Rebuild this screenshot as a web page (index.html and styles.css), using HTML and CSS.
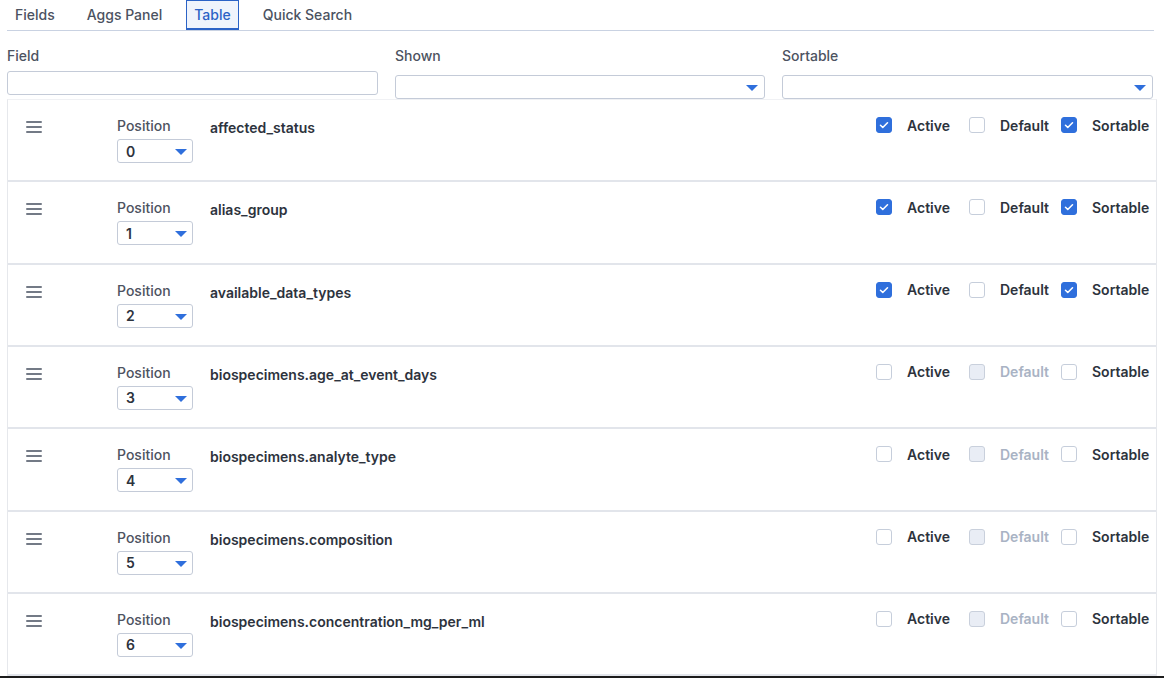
FILE: index.html
```html
<!DOCTYPE html>
<html>
<head>
<meta charset="utf-8">
<link rel="stylesheet" href="styles.css">
</head>
<body>
<div class="frame">
  <nav class="tabs">
    <div class="tab">Fields</div>
    <div class="tab">Aggs Panel</div>
    <div class="tab active">Table</div>
    <div class="tab">Quick Search</div>
  </nav>

  <div class="filters">
    <div class="filter">
      <label class="flabel">Field</label>
      <div class="input"></div>
    </div>
    <div class="filter">
      <label class="flabel">Shown</label>
      <div class="select wide"><span class="caret"></span></div>
    </div>
    <div class="filter">
      <label class="flabel">Sortable</label>
      <div class="select wide"><span class="caret"></span></div>
    </div>
  </div>

  <div class="list">
    <div class="row">
      <div class="handle"><span></span><span></span><span></span></div>
      <div class="pos"><div class="plabel">Position</div><div class="select small"><span class="val">0</span><span class="caret"></span></div></div>
      <div class="name">affected_status</div>
      <div class="checks">
        <div class="chk"><span class="box on"><svg viewBox="0 0 16 16"><path d="M4 8.3l2.6 2.5L12 5.4" /></svg></span><span class="clabel">Active</span></div>
        <div class="chk"><span class="box"></span><span class="clabel">Default</span></div>
        <div class="chk"><span class="box on"><svg viewBox="0 0 16 16"><path d="M4 8.3l2.6 2.5L12 5.4" /></svg></span><span class="clabel">Sortable</span></div>
      </div>
    </div>
    <div class="row">
      <div class="handle"><span></span><span></span><span></span></div>
      <div class="pos"><div class="plabel">Position</div><div class="select small"><span class="val">1</span><span class="caret"></span></div></div>
      <div class="name">alias_group</div>
      <div class="checks">
        <div class="chk"><span class="box on"><svg viewBox="0 0 16 16"><path d="M4 8.3l2.6 2.5L12 5.4" /></svg></span><span class="clabel">Active</span></div>
        <div class="chk"><span class="box"></span><span class="clabel">Default</span></div>
        <div class="chk"><span class="box on"><svg viewBox="0 0 16 16"><path d="M4 8.3l2.6 2.5L12 5.4" /></svg></span><span class="clabel">Sortable</span></div>
      </div>
    </div>
    <div class="row">
      <div class="handle"><span></span><span></span><span></span></div>
      <div class="pos"><div class="plabel">Position</div><div class="select small"><span class="val">2</span><span class="caret"></span></div></div>
      <div class="name">available_data_types</div>
      <div class="checks">
        <div class="chk"><span class="box on"><svg viewBox="0 0 16 16"><path d="M4 8.3l2.6 2.5L12 5.4" /></svg></span><span class="clabel">Active</span></div>
        <div class="chk"><span class="box"></span><span class="clabel">Default</span></div>
        <div class="chk"><span class="box on"><svg viewBox="0 0 16 16"><path d="M4 8.3l2.6 2.5L12 5.4" /></svg></span><span class="clabel">Sortable</span></div>
      </div>
    </div>
    <div class="row">
      <div class="handle"><span></span><span></span><span></span></div>
      <div class="pos"><div class="plabel">Position</div><div class="select small"><span class="val">3</span><span class="caret"></span></div></div>
      <div class="name">biospecimens.age_at_event_days</div>
      <div class="checks">
        <div class="chk"><span class="box"></span><span class="clabel">Active</span></div>
        <div class="chk disabled"><span class="box"></span><span class="clabel">Default</span></div>
        <div class="chk"><span class="box"></span><span class="clabel">Sortable</span></div>
      </div>
    </div>
    <div class="row">
      <div class="handle"><span></span><span></span><span></span></div>
      <div class="pos"><div class="plabel">Position</div><div class="select small"><span class="val">4</span><span class="caret"></span></div></div>
      <div class="name">biospecimens.analyte_type</div>
      <div class="checks">
        <div class="chk"><span class="box"></span><span class="clabel">Active</span></div>
        <div class="chk disabled"><span class="box"></span><span class="clabel">Default</span></div>
        <div class="chk"><span class="box"></span><span class="clabel">Sortable</span></div>
      </div>
    </div>
    <div class="row">
      <div class="handle"><span></span><span></span><span></span></div>
      <div class="pos"><div class="plabel">Position</div><div class="select small"><span class="val">5</span><span class="caret"></span></div></div>
      <div class="name">biospecimens.composition</div>
      <div class="checks">
        <div class="chk"><span class="box"></span><span class="clabel">Active</span></div>
        <div class="chk disabled"><span class="box"></span><span class="clabel">Default</span></div>
        <div class="chk"><span class="box"></span><span class="clabel">Sortable</span></div>
      </div>
    </div>
    <div class="row">
      <div class="handle"><span></span><span></span><span></span></div>
      <div class="pos"><div class="plabel">Position</div><div class="select small"><span class="val">6</span><span class="caret"></span></div></div>
      <div class="name">biospecimens.concentration_mg_per_ml</div>
      <div class="checks">
        <div class="chk"><span class="box"></span><span class="clabel">Active</span></div>
        <div class="chk disabled"><span class="box"></span><span class="clabel">Default</span></div>
        <div class="chk"><span class="box"></span><span class="clabel">Sortable</span></div>
      </div>
    </div>
  </div>
</div>
</body>
</html>
```

FILE: styles.css
```css
html, body {
  margin: 0;
  padding: 0;
  background: #ffffff;
}
body {
  font-family: Inter, "Noto Sans", "Liberation Sans", sans-serif;
  font-size: 14px;
  color: #2d333d;
}
.frame {
  height: 678px;
  box-sizing: border-box;
  border-bottom: 2px solid #1c1c1c;
  overflow: hidden;
  padding: 0 10px 0 7px;
}
.tabs {
  display: flex;
  gap: 16px;
  height: 30px;
  border-bottom: 1px solid #c9d2e2;
}
.tab {
  padding: 0 8px;
  line-height: 29px;
  height: 30px;
  box-sizing: border-box;
  font-weight: 500;
  color: #4b5261;
}
.tab.active {
  color: #2b63c6;
  background: #eff4fc;
  border: 1px solid #2b63c6;
  border-bottom-width: 2px;
  line-height: 27px;
  padding: 0 7px;
}
.filters {
  display: grid;
  grid-template-columns: 371px 370px 371px;
  column-gap: 17px;
  padding-top: 15px;
}
.filter {
  display: flex;
  flex-direction: column;
}
.flabel {
  font-weight: 500;
  color: #4d5361;
  line-height: 20px;
}
.input {
  margin-top: 5px;
  height: 24px;
  box-sizing: border-box;
  border: 1px solid #c4cbd8;
  border-radius: 3px;
}
.select {
  position: relative;
  height: 24px;
  box-sizing: border-box;
  border: 1px solid #c4cbd8;
  border-radius: 3px;
  display: flex;
  align-items: center;
}
.select.wide {
  margin-top: 9px;
}
.caret {
  position: absolute;
  right: 6px;
  top: 9px;
  width: 0;
  height: 0;
  border-left: 6px solid transparent;
  border-right: 6px solid transparent;
  border-top: 6px solid #2f6fdc;
}
.select.small {
  width: 76px;
  height: 24px;
  margin-top: 3px;
}
.select.small .caret {
  right: 5px;
}
.val {
  padding-left: 8px;
  font-weight: 600;
  color: #2d333d;
}
.list {
  margin-top: 0;
  margin-right: -3px;
  border-left: 1px solid #e6e8ec;
  border-right: 1px solid #e6e8ec;
  border-top: 1px solid #f0f1f4;
}
.row {
  height: 82.33px;
  box-sizing: border-box;
  border-bottom: 2px solid #e2e5eb;
  display: flex;
  align-items: flex-start;
  padding: 16px 0 0 18px;
}
.handle {
  width: 16px;
  margin-top: 5px;
  display: flex;
  flex-direction: column;
  gap: 3px;
}
.handle span {
  display: block;
  height: 2px;
  background: #737a86;
  border-radius: 1px;
}
.pos {
  margin-left: 75px;
  width: 93px;
}
.plabel {
  line-height: 20px;
  color: #4d5361;
  font-weight: 500;
}
.name {
  font-weight: 600;
  line-height: 20px;
  margin-top: 2px;
  color: #2d333d;
  flex: 1;
}
.checks {
  display: grid;
  grid-template-columns: 93px 92px 92px;
  margin-top: -1px;
  margin-right: 3px;
}
.chk {
  display: flex;
  align-items: center;
  height: 20px;
}
.box {
  width: 16px;
  height: 16px;
  box-sizing: border-box;
  border: 1px solid #c6cedb;
  border-radius: 3px;
  background: #fff;
  display: flex;
}
.box.on {
  background: #2f6fdc;
  border-color: #2f6fdc;
}
.box svg {
  width: 14px;
  height: 14px;
  fill: none;
  stroke: #fff;
  stroke-width: 1.8;
  stroke-linecap: round;
  stroke-linejoin: round;
}
.clabel {
  margin-left: 15px;
  font-weight: 600;
  color: #2d333d;
  white-space: nowrap;
}
.chk.disabled .box {
  background: #e9edf5;
  border-color: #c9d0dc;
}
.chk.disabled .clabel {
  color: #a9b3c4;
}
```
